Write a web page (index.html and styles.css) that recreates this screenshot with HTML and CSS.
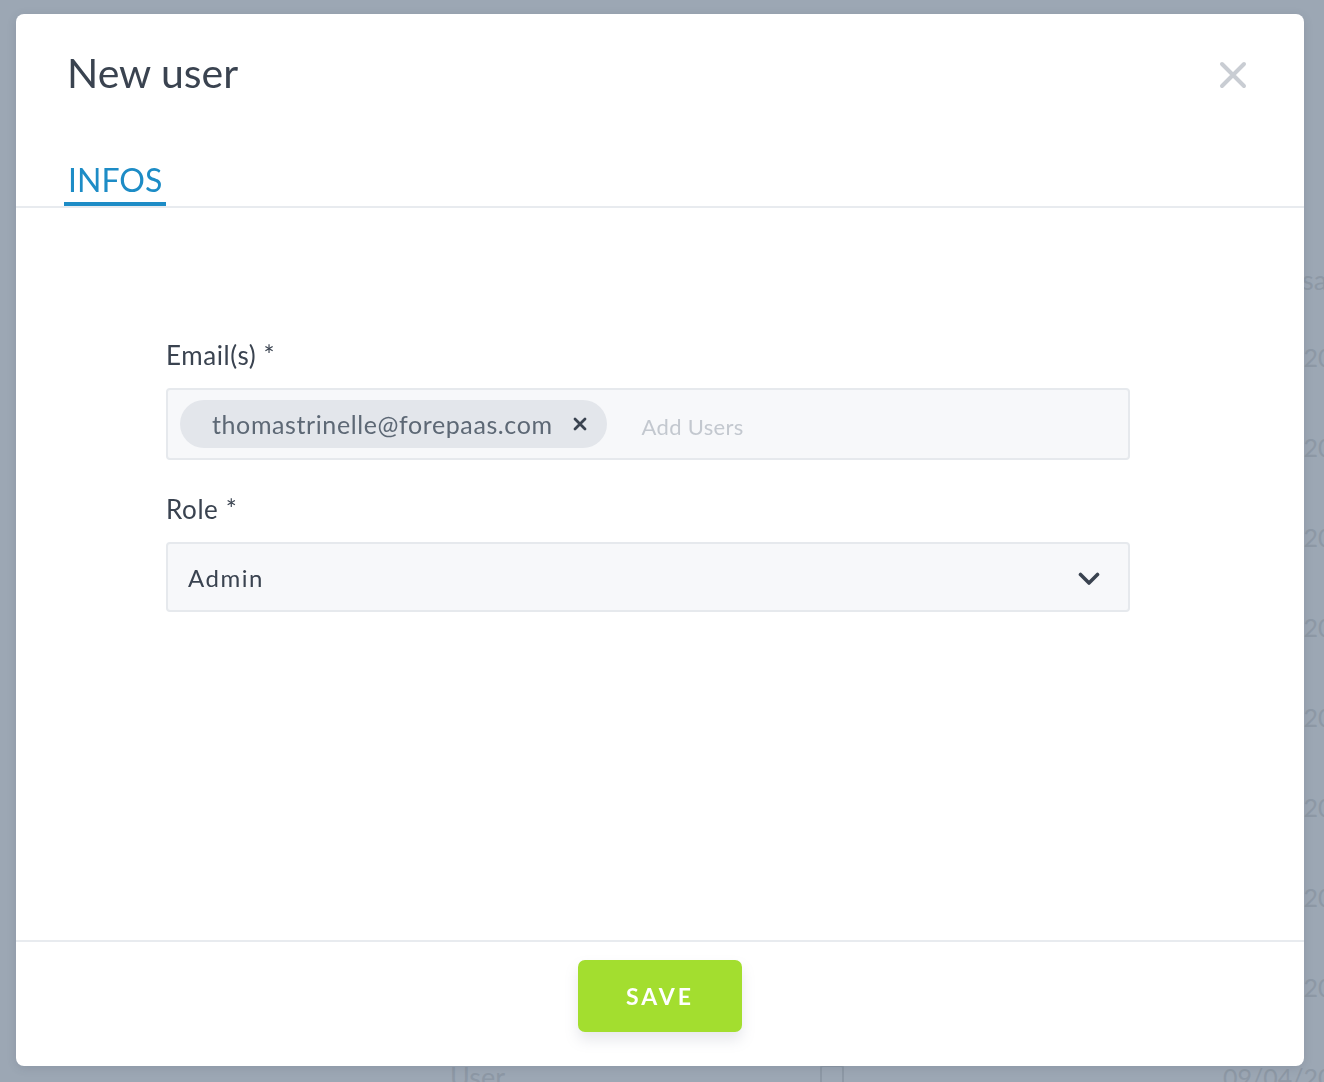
FILE: index.html
```html
<!DOCTYPE html>
<html lang="en">
<head>
<meta charset="utf-8">
<title>New user</title>
<link rel="stylesheet" href="styles.css">
</head>
<body>
<div class="backdrop-page">
  <div class="bg-head">sa</div>
  <div class="bg-row"><span class="bg-user">User</span><span class="bg-check"></span><span class="bg-date">09/04/2020</span></div>
  <div class="bg-row"><span class="bg-user">User</span><span class="bg-check"></span><span class="bg-date">09/04/2020</span></div>
  <div class="bg-row"><span class="bg-user">User</span><span class="bg-check"></span><span class="bg-date">09/04/2020</span></div>
  <div class="bg-row"><span class="bg-user">User</span><span class="bg-check"></span><span class="bg-date">09/04/2020</span></div>
  <div class="bg-row"><span class="bg-user">User</span><span class="bg-check"></span><span class="bg-date">09/04/2020</span></div>
  <div class="bg-row"><span class="bg-user">User</span><span class="bg-check"></span><span class="bg-date">09/04/2020</span></div>
  <div class="bg-row"><span class="bg-user">User</span><span class="bg-check"></span><span class="bg-date">09/04/2020</span></div>
  <div class="bg-row"><span class="bg-user">User</span><span class="bg-check"></span><span class="bg-date">09/04/2020</span></div>
  <div class="bg-row"><span class="bg-user">User</span><span class="bg-check"></span><span class="bg-date">09/04/2020</span></div>
</div>

<div class="modal">
  <div class="modal-head">
    <div class="title-row">
      <h1 class="title">New user</h1>
      <button class="close" aria-label="Close">
        <svg width="28" height="28" viewBox="0 0 28 28"><path d="M3 3 L25 25 M25 3 L3 25" stroke="#c9cdd3" stroke-width="4" stroke-linecap="round"/></svg>
      </button>
    </div>
    <div class="tabs">
      <div class="tab active">INFOS</div>
    </div>
  </div>

  <div class="modal-body">
    <div class="form">
      <label class="label">Email(s) *</label>
      <div class="input tags">
        <span class="chip"><span class="chip-text">thomastrinelle@forepaas.com</span>
          <svg class="chip-x" width="14" height="14" viewBox="0 0 14 14"><path d="M2 2 L12 12 M12 2 L2 12" stroke="#3a4350" stroke-width="2.8" stroke-linecap="round"/></svg>
        </span>
        <span class="placeholder">Add Users</span>
      </div>

      <label class="label role-label">Role *</label>
      <div class="input select">
        <span class="value">Admin</span>
        <svg class="chev" width="22" height="14" viewBox="0 0 22 14"><path d="M2.5 2.5 L11 11 L19.5 2.5" fill="none" stroke="#3a4350" stroke-width="3.6" stroke-linecap="round" stroke-linejoin="round"/></svg>
      </div>
    </div>
  </div>

  <div class="modal-foot">
    <button class="save">SAVE</button>
  </div>
</div>
</body>
</html>
```

FILE: styles.css
```css
* { box-sizing: border-box; }

html, body {
  margin: 0;
  height: 100%;
}

body {
  background: #9ca7b4;
  font-family: Lato, "Open Sans", sans-serif;
  color: #3a4350;
  overflow: hidden;
}

/* faint page behind the overlay */
.backdrop-page {
  height: 100vh;
  overflow: hidden;
  padding-top: 262px;
  color: #8d98a5;
  font-size: 27px;
}

.bg-head {
  padding-left: 1302px;
  height: 75px;
  line-height: 36px;
}

.bg-row {
  display: grid;
  grid-template-columns: 450px 370px 403px 1fr;
  height: 90px;
  line-height: 40px;
}

.bg-user { grid-column: 2; }
.bg-check {
  grid-column: 3;
  width: 24px;
  height: 24px;
  border: 2px solid #8d98a5;
  border-radius: 3px;
  margin-top: 8px;
}
.bg-date {
  grid-column: 4;
  white-space: nowrap;
  font-size: 25px;
}

/* modal */
.modal {
  position: fixed;
  left: 16px;
  top: 14px;
  width: 1288px;
  height: 1052px;
  background: #fff;
  border-radius: 8px;
  display: flex;
  flex-direction: column;
  box-shadow: 0 2px 10px rgba(60, 70, 85, 0.15);
}

.modal-head {
  padding: 34px 48px 0 48px;
  border-bottom: 2px solid #e8ebef;
}

.title-row {
  display: flex;
  justify-content: space-between;
  align-items: flex-start;
}

.title {
  margin: 0 0 0 3px;
  font-size: 41px;
  font-weight: 400;
  line-height: 50px;
  color: #3a4350;
}

.close {
  margin: 13px 9px 0 0;
  padding: 0;
  border: 0;
  background: none;
  width: 28px;
  height: 28px;
}

.tabs {
  display: flex;
  margin-top: 60px;
}

.tab {
  padding: 0 4px;
  font-size: 32px;
  line-height: 44px;
  color: #1d8cc6;
  border-bottom: 4px solid #1d8cc6;
}

.modal-body {
  flex: 1;
  padding: 132px 0 0 150px;
}

.form {
  width: 964px;
  display: flex;
  flex-direction: column;
}

.label {
  font-size: 26px;
  line-height: 30px;
  color: #3a4350;
  margin-bottom: 18px;
  letter-spacing: 0.6px;
}

.role-label {
  margin-top: 34px;
  margin-bottom: 18px;
}

.input {
  background: #f7f8fa;
  border: 2px solid #e6e9ed;
  border-radius: 4px;
  display: flex;
  align-items: center;
}

.tags {
  height: 72px;
  padding: 0 12px;
}

.chip {
  display: flex;
  align-items: center;
  height: 48px;
  padding: 0 20px 0 32px;
  border-radius: 24px;
  background: #e3e6eb;
  color: #5d6875;
  font-size: 25px;
  letter-spacing: 0.6px;
}

.chip-x {
  margin-left: 20px;
}

.placeholder {
  margin-left: 35px;
  font-size: 22px;
  color: #c3c8cf;
  letter-spacing: 0.3px;
  padding-top: 4px;
}

.select {
  height: 70px;
  padding: 0 28px 0 20px;
  justify-content: space-between;
}

.value {
  font-size: 24px;
  letter-spacing: 1.5px;
  color: #3a4350;
}

.chev { margin-top: 3px; }

.modal-foot {
  border-top: 2px solid #e8ebef;
  padding: 18px 0 34px;
  display: flex;
  justify-content: center;
}

.save {
  width: 164px;
  height: 72px;
  border: 0;
  border-radius: 7px;
  background: #a3de2f;
  color: #fff;
  font-family: Lato, "Open Sans", sans-serif;
  font-weight: 700;
  font-size: 23px;
  letter-spacing: 3px;
  box-shadow: 0 8px 14px rgba(120, 130, 150, 0.18);
}
```
